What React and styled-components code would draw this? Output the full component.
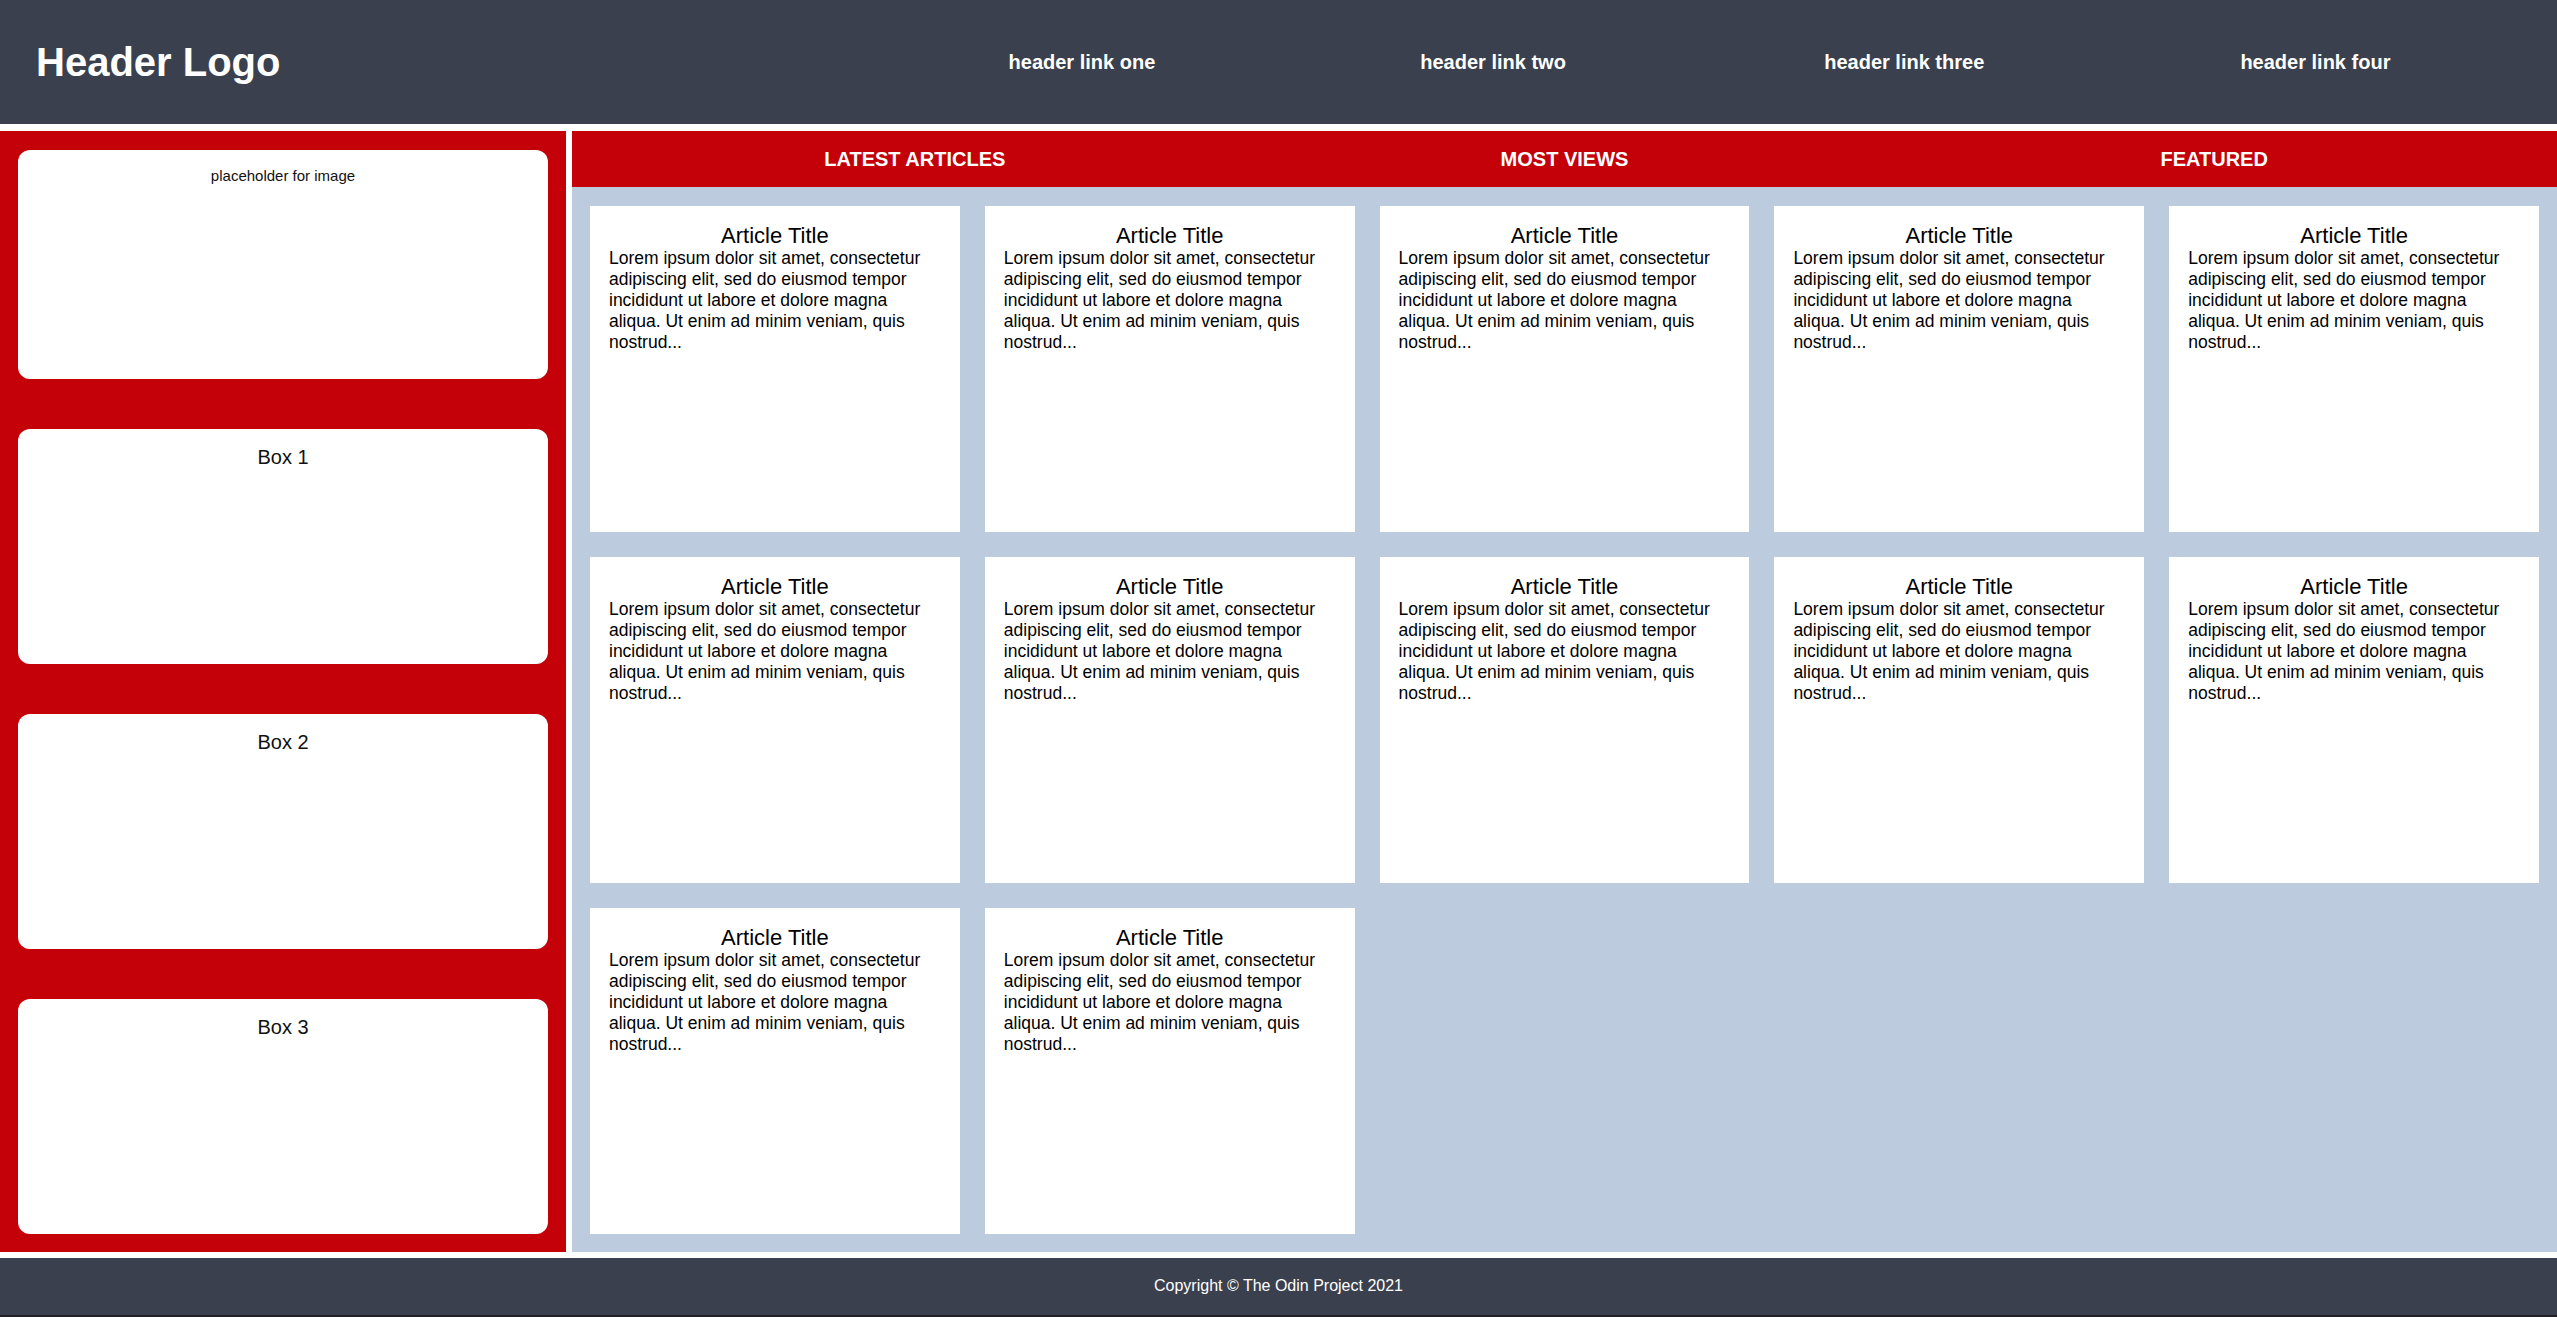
import styled, { createGlobalStyle } from 'styled-components';

const GlobalStyle = createGlobalStyle`
    * {
        box-sizing: border-box;
    }

    body {
        margin: 0;
        background: #ffffff;
        font-family: "Liberation Sans", Arial, sans-serif;
        color: #000000;
    }
`;

const links = ["header link one", "header link two", "header link three", "header link four"];
const tabs = ["Latest Articles", "Most Views", "Featured"];
const boxes = ["Box 1", "Box 2", "Box 3"];
const lorem = "Lorem ipsum dolor sit amet, consectetur adipiscing elit, sed do eiusmod tempor incididunt ut labore et dolore magna aliqua. Ut enim ad minim veniam, quis nostrud...";

const App = () => {
    const articles = Array.from({ length: 12 }, (_, i) => i);

    return (
        <>
            <GlobalStyle />
            <Page>
                <Header>
                    <Logo>Header Logo</Logo>
                    <HeaderNav>
                        {links.map((link) => (
                            <HeaderLink key={link}>{link}</HeaderLink>
                        ))}
                    </HeaderNav>
                </Header>

                <Sidebar>
                    <SideBox small>placeholder for image</SideBox>
                    {boxes.map((box) => (
                        <SideBox key={box}>{box}</SideBox>
                    ))}
                </Sidebar>

                <Main>
                    <Tabs>
                        {tabs.map((tab) => (
                            <Tab key={tab}>{tab}</Tab>
                        ))}
                    </Tabs>
                    <Cards>
                        {articles.map((i) => (
                            <Card key={i}>
                                <CardTitle>Article Title</CardTitle>
                                <CardText>{lorem}</CardText>
                            </Card>
                        ))}
                    </Cards>
                </Main>

                <Footer>Copyright © The Odin Project 2021</Footer>
            </Page>
        </>
    )
}

const Page = styled.div`
    display: grid;
    height: 100vh;
    grid-template-columns: 566px 1fr;
    grid-template-rows: 124px 1fr 59px;
    column-gap: 6px;
    row-gap: 6.5px;
`;

const Header = styled.header`
    grid-column: 1 / -1;
    background: #3a404d;
    color: #ffffff;
    display: grid;
    grid-template-columns: 1fr 2fr;
    column-gap: 18px;
    align-items: center;
    padding: 0 36px;
`;

const Logo = styled.h1`
    margin: 0;
    font-size: 40px;
    font-weight: 700;
`;

const HeaderNav = styled.nav`
    display: grid;
    grid-template-columns: repeat(4, 1fr);
    align-items: center;
`;

const HeaderLink = styled.a`
    text-align: center;
    font-size: 20px;
    font-weight: 700;
    color: #ffffff;
`;

const Sidebar = styled.aside`
    background: #c40008;
    display: grid;
    grid-template-rows: 229px repeat(3, 1fr);
    row-gap: 50px;
    padding: 19px 18px 18px;
`;

const SideBox = styled.div`
    background: #ffffff;
    border-radius: 12px;
    text-align: center;
    padding-top: ${(p) => (p.small ? "17px" : "17px")};
    font-size: ${(p) => (p.small ? "15px" : "20px")};
    color: #111111;
`;

const Main = styled.main`
    background: #bccbde;
    display: grid;
    grid-template-rows: 56px 1fr;
`;

const Tabs = styled.div`
    background: #c40008;
    display: grid;
    grid-template-columns: repeat(3, 1fr);
    align-items: center;
    padding: 0 18px;
`;

const Tab = styled.div`
    text-align: center;
    color: #ffffff;
    font-size: 20px;
    font-weight: 700;
    text-transform: uppercase;
    padding-top: 1px;
`;

const Cards = styled.div`
    display: grid;
    grid-template-columns: repeat(5, 1fr);
    grid-template-rows: repeat(3, 1fr);
    gap: 25px;
    padding: 19px 18px 18px;
`;

const Card = styled.article`
    background: #ffffff;
    padding: 17.5px 19px;
`;

const CardTitle = styled.h2`
    margin: 0;
    text-align: center;
    font-size: 22px;
    font-weight: 400;
    line-height: 1.15;
`;

const CardText = styled.p`
    margin: 0;
    font-size: 17.5px;
    line-height: 21px;
`;

const Footer = styled.footer`
    grid-column: 1 / -1;
    background: #3a404d;
    border-bottom: 2px solid #1f2124;
    color: #ffffff;
    font-size: 16px;
    display: flex;
    align-items: center;
    justify-content: center;
    padding-bottom: 1px;
`;

export default App
